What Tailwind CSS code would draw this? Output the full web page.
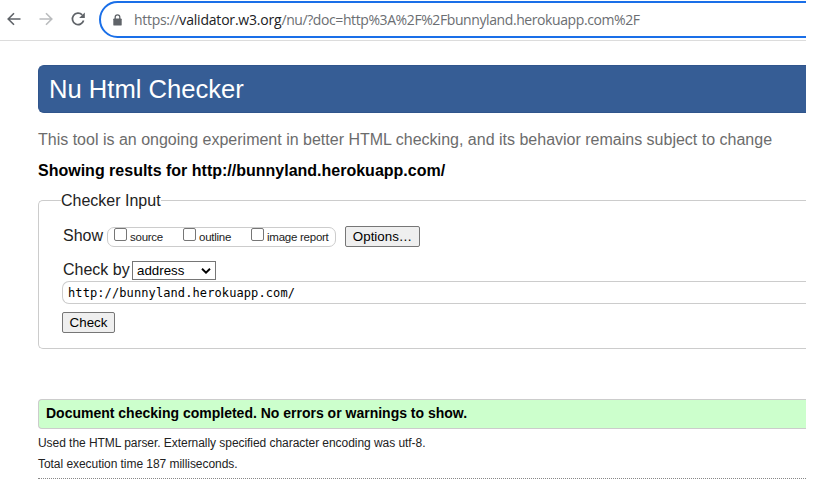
<!DOCTYPE html>
<html lang="en">
<head>
<meta charset="utf-8">
<title>Nu Html Checker</title>
<script src="https://cdn.jsdelivr.net/npm/@tailwindcss/browser@4"></script>
</head>
<body class="h-[496px] overflow-hidden bg-white font-['Liberation_Sans',Arial,sans-serif] text-[16px] text-[#222]">
<div class="h-[496px] w-[806px] overflow-hidden">
  <!-- Browser toolbar -->
  <header class="flex h-[41px] items-start border-b border-[#dcdcdc]">
    <nav class="flex pt-[10px] pl-[5px] text-[#5f6368]">
      <svg class="mr-[14px] h-[18px] w-[18px]" viewBox="0 0 18 18" fill="none" stroke="currentColor" stroke-width="1.6"><path d="M15.5 9H3.5M9 3.2 3.2 9 9 14.8"/></svg>
      <svg class="mr-[14px] h-[18px] w-[18px] text-[#babcbe]" viewBox="0 0 18 18" fill="none" stroke="currentColor" stroke-width="1.6"><path d="M2.5 9h12M9 3.2 14.8 9 9 14.8"/></svg>
      <svg class="h-[18px] w-[18px]" viewBox="0 0 18 18" fill="none" stroke="currentColor" stroke-width="1.7"><path d="M13.2 4.9A5.7 5.7 0 1 0 14.6 10.5"/><path d="M15.8 2.4v5.7h-5.7z" fill="currentColor" stroke="none"/></svg>
    </nav>
    <div class="mt-[1px] ml-[12px] flex h-[37px] w-[760px] shrink-0 items-center rounded-l-full border-2 border-[#1a6fe8] pl-[12px]">
      <svg class="h-[12px] w-[9px]" viewBox="0 0 9 12"><path d="M2.2 5V3.1a2.3 2.3 0 0 1 4.6 0V5" fill="none" stroke="#5f6368" stroke-width="1.3"/><rect x=".3" y="4.4" width="8.4" height="7.2" rx=".9" fill="#5f6368"/></svg>
      <span class="ml-[12px] font-['Open_Sans','Noto_Sans',sans-serif] text-[14px] leading-[20px] tracking-[-0.3px] whitespace-nowrap text-[#6b6e72]">https://<span class="tracking-[-0.2px] text-[#202124]">validator.w3.org</span><span class="tracking-[-0.41px]">/nu/?doc=http%3A%2F%2Fbunnyland.herokuapp.com%2F</span></span>
    </div>
  </header>

  <main class="pt-[24px] pl-[38px]">
    <h1 class="h-[48px] rounded-l-[6px] border-y border-l border-[#30558c] bg-[#365d95] pl-[10px] text-[25.6px] leading-[46px] text-white">Nu Html Checker</h1>
    <p class="mt-[17px] h-[20px] leading-[20px] whitespace-nowrap text-[#6c6c6c]">This tool is an ongoing experiment in better HTML checking, and its behavior remains subject to change</p>
    <h2 class="mt-[11px] h-[20px] leading-[20px] font-bold text-black">Showing results for http://bunnyland.herokuapp.com/</h2>

    <form>
      <fieldset class="mt-[10px] h-[158px] rounded-l-[5px] border-y border-l border-[#ccc] pl-[23px]">
        <legend class="-ml-[1px] h-[18px] leading-[19px]">Checker Input</legend>
        <div class="mt-[17px] flex h-[21px]">
          <span class="w-[45px] pl-px leading-[19px]">Show</span>
          <div class="mt-px flex h-[20px] w-[229px] rounded-[7px] border border-[#ccc] pl-[6px] text-[11.5px] tracking-[-0.25px]">
            <label class="flex w-[69px]"><input type="checkbox" class="mr-[3px] h-[13px] w-[13px] appearance-none rounded-[2px] border border-[#767676] bg-white"><span class="leading-[19px]">source</span></label>
            <label class="flex w-[68px]"><input type="checkbox" class="mr-[3px] h-[13px] w-[13px] appearance-none rounded-[2px] border border-[#767676] bg-white"><span class="leading-[19px]">outline</span></label>
            <label class="flex whitespace-nowrap"><input type="checkbox" class="mr-[3px] h-[13px] w-[13px] appearance-none rounded-[2px] border border-[#767676] bg-white"><span class="leading-[19px]">image report</span></label>
          </div>
          <button type="button" class="ml-[9px] h-[21px] w-[75px] rounded-[2px] border border-[#767676] bg-[#efefef] text-[13.33px] leading-[19px] text-black">Options…</button>
        </div>
        <div class="mt-[14px] flex h-[19px]">
          <span class="w-[71px] pl-[1px] leading-[18px] whitespace-nowrap">Check by</span>
          <div class="-ml-px flex w-[84px] items-center justify-between border border-[#767676] pr-[4px] pl-[4px] text-[13.33px] leading-[17px] text-black">address
            <svg class="h-[6px] w-[10px]" viewBox="0 0 10 6" fill="none" stroke="currentColor" stroke-width="1.9"><path d="M1 .8 5 4.7 9 .8"/></svg>
          </div>
        </div>
        <div class="mt-px h-[23px] rounded-l-[7px] border-y border-l border-[#ccc] pl-[5px] font-['DejaVu_Sans_Mono',monospace] text-[12px] leading-[23px] tracking-[0.1px] text-black">http://bunnyland.herokuapp.com/</div>
        <button type="button" class="mt-[8px] block h-[21px] w-[53px] rounded-[2px] border border-[#767676] bg-[#efefef] text-[13.33px] leading-[18px] text-black">Check</button>
      </fieldset>
    </form>

    <p class="mt-[50px] h-[30px] rounded-l-[4px] border-y border-l border-[#ccc] bg-[#cfc] pl-[7px] text-[14px] leading-[26px] font-bold text-black">Document checking completed. No errors or warnings to show.</p>
    <p class="mt-[5px] h-[18px] text-[12px] leading-[18px] tracking-[-0.05px]">Used the HTML parser. Externally specified character encoding was utf-8.</p>
    <p class="mt-[3px] h-[18px] text-[12px] leading-[18px] tracking-[-0.05px]">Total execution time 187 milliseconds.</p>
    <hr class="mt-[5px] border-t border-dotted border-[#888]">
  </main>
</div>
</body>
</html>
